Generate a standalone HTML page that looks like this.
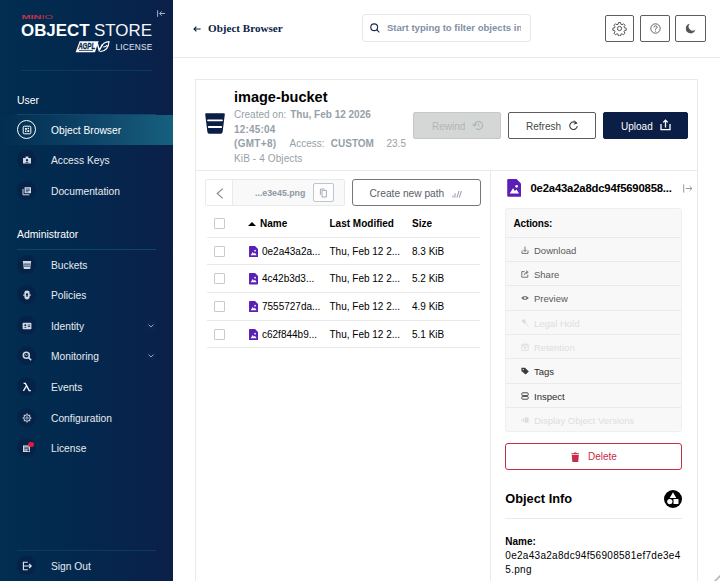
<!DOCTYPE html>
<html lang="en">
<head>
<meta charset="utf-8">
<title>MinIO Console</title>
<style>
*{box-sizing:border-box;margin:0;padding:0}
html,body{width:720px;height:581px;overflow:hidden;background:#fff}
body{font-family:"Liberation Sans",sans-serif;font-size:9.7px;color:#000;position:relative}
.abs{position:absolute}
.nw{white-space:nowrap}
/* sidebar */
#side{position:absolute;left:0;top:0;width:173px;height:581px;background:linear-gradient(90deg,#022e50 0%,#03274e 50%,#0b2049 100%);overflow:hidden}
#side .hr{position:absolute;height:1px;background:#0f446c}
#side .grp{position:absolute;left:17px;font-size:10.4px;color:#fff;white-space:nowrap}
.mi{position:absolute;left:0;width:173px;height:30px}
.mi .ic{position:absolute;left:17px;top:5px;width:19px;height:19px;border-radius:50%;background:rgba(8,28,66,.6)}
.mi .ic svg{position:absolute;left:4.5px;top:4.5px;width:10px;height:10px}
.mi .tx{position:absolute;left:51px;top:1px;line-height:30px;font-size:10.25px;color:#e6ebf0;white-space:nowrap}
.mi.sel{background:linear-gradient(90deg,rgba(22,96,127,0) 0%,#16607f 100%)}
.mi.sel .ic{background:transparent;border:1px solid #fff}
.mi.sel .ic svg{left:3.5px;top:3.5px}
.mi.sel .tx{color:#fff}
.mi .chev{position:absolute;left:146px;top:10px;width:10px;height:10px;background:#0a2450;border-radius:1px}
/* header */
#hdr{position:absolute;left:173px;top:0;width:547px;height:58px;background:#fff;border-bottom:1px solid #eaeaea}
.hbtn{position:absolute;top:15px;width:29px;height:27px;border:1px solid #5e5e5e;border-radius:2px;background:#fff}
/* card */
#card{position:absolute;left:195px;top:79px;width:503px;height:520px;border:1px solid #eaeaea;background:#fff}
.btn{position:absolute;top:112px;height:27px;border-radius:2px;font-size:10px;line-height:25px;white-space:nowrap}
.gray{color:#969fa8}
.btn span{top:.6px}
.row{position:absolute;left:207px;width:273px;height:1px;background:#eaeaea}
.cb{position:absolute;left:214px;width:11px;height:11px;border:1px solid #cacaca;border-radius:1px;background:#fff}
.cell{position:absolute;font-size:10px;white-space:nowrap;color:#000;line-height:12px}
.act{position:absolute;left:506px;width:175px;height:24px;border-top:1px solid #eaeaea;font-size:9.5px;line-height:24px;color:#2c2c2c;white-space:nowrap}
.act span{position:absolute;left:28px;top:.7px}
.act svg{position:absolute;left:15px;top:8px;width:8px;height:8px}
.act.dis{color:#dedede}
.act.lt{color:#5a5a5a}
</style>
</head>
<body>
<div id="side">
<svg class="abs" style="left:0;top:0" width="173" height="60" viewBox="0 0 173 60">
 <text x="21.5" y="18.6" font-family="Liberation Sans, sans-serif" font-size="6.2" fill="#c8314a" textLength="31.5" lengthAdjust="spacingAndGlyphs"><tspan font-weight="700">MIN</tspan><tspan font-weight="400">IO</tspan></text>
 <text x="21" y="36.4" font-family="Liberation Sans, sans-serif" font-size="16.4" font-weight="700" fill="#fff" textLength="68.5" lengthAdjust="spacingAndGlyphs">OBJECT</text>
 <text x="94" y="36.4" font-family="Liberation Sans, sans-serif" font-size="16.4" font-weight="400" fill="#f4f6f9" textLength="58" lengthAdjust="spacingAndGlyphs">STORE</text>
 <path d="M79.6 41.3 L98.6 41.3 L95 52.2 L75.6 52.2 Z" fill="#fff"/>
 <text x="78.2" y="48.9" font-family="Liberation Sans, sans-serif" font-size="8.4" font-weight="700" font-style="italic" fill="#0a2850" stroke="#0a2850" stroke-width="0.3" textLength="17" lengthAdjust="spacingAndGlyphs">AGPL</text>
 <path d="M79 50.4 H93" stroke="#0a2850" stroke-width="0.8"/>
 <path d="M97.4 43.6 L99.2 50.4 L102.6 44.4" fill="none" stroke="#fff" stroke-width="1.5"/>
 <path d="M100.2 51.6 Q108.4 51 109 41.6 Q103.4 42 101.6 46.2 M103.2 47 Q105.6 47.2 107.2 45.2" fill="none" stroke="#fff" stroke-width="1.1"/>
 <text x="115.5" y="49.5" font-family="Liberation Sans, sans-serif" font-size="8.3" fill="#e4e8ee" textLength="36.8" lengthAdjust="spacing">LICENSE</text>
 <path d="M157.6 10.3 V16.8 M165 13.5 H159.6 M161.8 11.3 L159.6 13.5 L161.8 15.7" fill="none" stroke="#b9c3d4" stroke-width="0.9"/>
</svg>
<div class="hr" style="left:21px;top:70px;width:131px;background:#0c3a5f"></div>
<div class="grp" style="top:94.5px">User</div>
<div class="hr" style="left:17px;top:114px;width:139px"></div>
<div class="mi sel" style="top:115px"><div class="ic"><svg viewBox="0 0 10 10"><rect x="1.2" y="1.2" width="7.6" height="7.6" rx="1" fill="none" stroke="#fff" stroke-width="1"/><rect x="3" y="3" width="1.8" height="1.8" fill="#fff"/><rect x="5.4" y="5.2" width="1.8" height="1.8" fill="#fff"/><rect x="5.6" y="2.8" width="1.4" height="1.4" fill="#fff"/><rect x="3" y="5.6" width="1.4" height="1.4" fill="#fff"/></svg></div><div class="tx">Object Browser</div></div>
<div class="mi" style="top:145px"><div class="ic"><svg viewBox="0 0 10 10"><path d="M1 3 H9 V8.6 H1 Z M3.6 1.4 H6.4 V3 H3.6 Z" fill="#cfd8e3"/><circle cx="5" cy="5.2" r="1.1" fill="#072045"/><path d="M3.2 7.8 Q5 5.8 6.8 7.8 Z" fill="#072045"/></svg></div><div class="tx">Access Keys</div></div>
<div class="mi" style="top:176px"><div class="ic"><svg viewBox="0 0 10 10"><path d="M2.6 1.2 H9 V7.2 H2.6 Z" fill="#cfd8e3"/><path d="M1 3 V8.8 H7.4" fill="none" stroke="#cfd8e3" stroke-width="1"/><path d="M3.8 3 H7.8 M3.8 4.4 H7.8 M3.8 5.8 H6.4" stroke="#072045" stroke-width="0.7"/></svg></div><div class="tx">Documentation</div></div>
<div class="mi" style="top:250px"><div class="ic"><svg viewBox="0 0 10 10"><path d="M0.8 1 H9.2 L8.2 9 H1.8 Z" fill="#cfd8e3"/><path d="M1.6 4.1 H8.4 M1.9 6.1 H8.1" stroke="#072045" stroke-width="0.8"/></svg></div><div class="tx">Buckets</div></div>
<div class="mi" style="top:280px"><div class="ic"><svg viewBox="0 0 10 10"><path d="M5 0.6 C6.6 0.6 7.6 1.4 7.6 2.6 L7.6 7 C7.6 8.4 6.4 9.4 5 9.4 C3.6 9.4 2.4 8.4 2.4 7 L2.4 2.6 C2.4 1.4 3.4 0.6 5 0.6 Z" fill="#cfd8e3"/><circle cx="5" cy="4.4" r="1.1" fill="#072045"/><rect x="4.5" y="4.8" width="1" height="2.2" fill="#072045"/><path d="M1.4 4.2 H2.6 V6 H1.4 Z M7.4 4.2 H8.6 V6 H7.4 Z" fill="#cfd8e3"/></svg></div><div class="tx">Policies</div></div>
<div class="mi" style="top:311px"><div class="ic"><svg viewBox="0 0 10 10"><rect x="0.6" y="1.8" width="8.8" height="6.4" rx="0.8" fill="#cfd8e3"/><circle cx="3.3" cy="4.2" r="1" fill="#072045"/><path d="M1.8 6.8 Q3.3 5 4.8 6.8 Z" fill="#072045"/><path d="M5.8 4 H8.2 M5.8 5.6 H8.2" stroke="#072045" stroke-width="0.8"/></svg></div><div class="tx">Identity</div><div class="chev"><svg class="abs" style="left:2px;top:3px" width="6" height="4" viewBox="0 0 6 4"><path d="M0.6 0.6 L3 3 L5.4 0.6" fill="none" stroke="#aab6c8" stroke-width="0.9"/></svg></div></div>
<div class="mi" style="top:341px"><div class="ic"><svg viewBox="0 0 10 10"><circle cx="4.3" cy="4.3" r="3" fill="none" stroke="#cfd8e3" stroke-width="1.5"/><path d="M6.6 6.6 L9.2 9.2" stroke="#cfd8e3" stroke-width="1.6"/><path d="M2.6 4.6 L3.8 3.6 L4.6 4.8 L6 3.4" fill="none" stroke="#cfd8e3" stroke-width="0.7"/></svg></div><div class="tx">Monitoring</div><div class="chev"><svg class="abs" style="left:2px;top:3px" width="6" height="4" viewBox="0 0 6 4"><path d="M0.6 0.6 L3 3 L5.4 0.6" fill="none" stroke="#aab6c8" stroke-width="0.9"/></svg></div></div>
<div class="mi" style="top:372px"><div class="ic"><svg viewBox="0 0 10 10"><path d="M1.6 1.4 H3.4 L7.2 8.6 H8.8 M4.4 4 L1.4 8.8" fill="none" stroke="#fff" stroke-width="1.3"/></svg></div><div class="tx">Events</div></div>
<div class="mi" style="top:403px"><div class="ic"><svg viewBox="0 0 10 10"><circle cx="5" cy="5" r="3.2" fill="none" stroke="#cfd8e3" stroke-width="1"/><circle cx="5" cy="5" r="1.2" fill="none" stroke="#cfd8e3" stroke-width="0.8"/><path d="M5 0.6 V1.8 M5 8.2 V9.4 M0.6 5 H1.8 M8.2 5 H9.4 M1.9 1.9 L2.7 2.7 M7.3 7.3 L8.1 8.1 M1.9 8.1 L2.7 7.3 M7.3 2.7 L8.1 1.9" stroke="#cfd8e3" stroke-width="1.2"/></svg></div><div class="tx">Configuration</div></div>
<div class="mi" style="top:433px"><div class="ic"><svg viewBox="0 0 10 10"><path d="M1 2.4 H8 V9 H1 Z" fill="#cfd8e3"/><path d="M2.2 4.2 H6.8 M2.2 5.6 H6.8 M2.2 7.2 H4.6" stroke="#072045" stroke-width="0.7"/><rect x="5.4" y="6.4" width="1.8" height="1.8" fill="#072045"/></svg></div><div class="tx">License</div><div class="abs" style="left:28px;top:8.5px;width:5.5px;height:5.5px;border-radius:50%;background:#e21b3c"></div></div>
<div class="mi" style="top:551px"><div class="ic"><svg viewBox="0 0 10 10"><path d="M5.8 1.2 H1.4 V8.8 H5.8" fill="none" stroke="#e4e9f0" stroke-width="1.1"/><path d="M1.4 5 H9 M7.2 3 L9.2 5 L7.2 7" fill="none" stroke="#e4e9f0" stroke-width="1.1"/></svg></div><div class="tx">Sign Out</div></div>
<div class="grp" style="top:229px">Administrator</div>
<div class="hr" style="left:17px;top:249px;width:139px"></div>
<div class="hr" style="left:17px;top:550px;width:139px;background:#0d3a61"></div>
</div>
<div id="hdr">
<svg class="abs" style="left:20px;top:24.5px" width="8" height="8" viewBox="0 0 8 8"><path d="M7.6 4 H1.2 M3.4 1.6 L1 4 L3.4 6.4" fill="none" stroke="#0b1e46" stroke-width="1.1"/></svg>
<div class="abs nw" style="left:35px;top:21px;font-family:'Liberation Serif',serif;font-weight:700;font-size:11.1px;line-height:14px;color:#0b1e46">Object Browser</div>
<div class="abs" style="left:189px;top:14px;width:169px;height:28px;border:1px solid #e6e6e6;border-radius:3px;background:#fff;overflow:hidden">
 <svg class="abs" style="left:6.5px;top:8px" width="10" height="10" viewBox="0 0 10 10"><circle cx="4.2" cy="4.2" r="3.4" fill="none" stroke="#1b2a4a" stroke-width="1.15"/><path d="M6.7 6.7 L9.3 9.3" stroke="#1b2a4a" stroke-width="1.2"/></svg>
 <div class="abs nw" style="left:24px;top:6px;font-weight:700;font-size:9.55px;line-height:14px;color:#7f8fa6;width:134px;overflow:hidden">Start typing to filter objects in the bucket</div>
</div>
<div class="hbtn" style="left:432px"><svg class="abs" style="left:6px;top:5px" width="15" height="15" viewBox="0 0 24 24"><path fill="none" stroke="#555" stroke-width="1.6" stroke-linejoin="round" d="M10.3 2.5h3.4l.5 2.7 1.9.8 2.3-1.6 2.4 2.4-1.6 2.3.8 1.9 2.7.5v3.4l-2.7.5-.8 1.9 1.6 2.3-2.4 2.4-2.3-1.6-1.9.8-.5 2.7h-3.4l-.5-2.7-1.9-.8-2.3 1.6-2.4-2.4 1.6-2.3-.8-1.9-2.7-.5v-3.4l2.7-.5.8-1.9-1.6-2.3 2.4-2.4 2.3 1.6 1.9-.8z"/><circle cx="12" cy="12" r="3.4" fill="none" stroke="#555" stroke-width="1.6"/></svg></div>
<div class="hbtn" style="left:467px;width:30px"><svg class="abs" style="left:9px;top:7px" width="11" height="11" viewBox="0 0 11 11"><circle cx="5.5" cy="5.5" r="4.7" fill="none" stroke="#555" stroke-width="0.9"/><path d="M3.9 4.4 Q3.9 2.9 5.5 2.9 Q7.1 2.9 7.1 4.3 Q7.1 5.2 5.5 5.9 V6.7" fill="none" stroke="#555" stroke-width="0.9"/><circle cx="5.5" cy="8" r="0.6" fill="#555"/></svg></div>
<div class="hbtn" style="left:502px;width:31px"><svg class="abs" style="left:9px;top:7px" width="11" height="11" viewBox="0 0 11 11"><path d="M5 0.8 A4.8 4.8 0 1 0 10.3 6.6 A3.9 3.9 0 0 1 5 0.8 Z" fill="#555"/></svg></div>
</div>
<div id="card">
<svg class="abs" style="left:9px;top:33px" width="20" height="21" viewBox="0 0 20 21"><path d="M1.2 0.3 H18.8 Q20 0.3 19.8 1.5 L17.6 19 Q17.4 20.7 15.8 20.7 H4.2 Q2.6 20.7 2.4 19 L0.2 1.5 Q0 0.3 1.2 0.3 Z" fill="#0b1e46"/><path d="M3 7.3 H17 M3.8 14 H16.2" stroke="#fff" stroke-width="1.8" stroke-linecap="round"/></svg>
<div class="abs nw" style="left:38px;top:7.5px;font-weight:700;font-size:14.5px;line-height:18px;color:#000">image-bucket</div>
<div class="abs nw gray" style="left:38px;top:28px;font-size:10px;line-height:14.5px"><span class="abs" style="left:0;top:0">Created on:</span><b class="abs" style="left:56.2px;top:0">Thu, Feb 12 2026</b><b class="abs" style="left:0;top:14.5px;letter-spacing:0.18px">12:45:04</b><b class="abs" style="left:0;top:29px;letter-spacing:0.3px">(GMT+8)</b><span class="abs" style="left:55.5px;top:29px">Access:</span><b class="abs" style="left:96.8px;top:29px">CUSTOM</b><span class="abs" style="left:152.5px;top:29px">23.5</span><span class="abs" style="left:0;top:43.5px;letter-spacing:0.12px">KiB - 4 Objects</span></div>
<div class="btn" style="left:217px;top:32px;width:88px;background:#d5d7d7;border:1px solid #c6c8c8;color:#b0b5b8"><span class="abs" style="left:18px">Rewind</span><svg class="abs" style="left:58px;top:6.5px" width="12" height="11" viewBox="0 0 12 11"><path d="M2.6 5.4 A4 4 0 1 1 4 8.5" fill="none" stroke="#b0b5b8" stroke-width="1.15"/><path d="M0.5 3.8 L2.6 6 L4.7 4" fill="none" stroke="#b0b5b8" stroke-width="1.15"/><path d="M6.6 3.3 V5.6 L8.2 6.6" fill="none" stroke="#b0b5b8" stroke-width="0.9"/></svg></div>
<div class="btn" style="left:312px;top:32px;width:88px;background:#fff;border:1px solid #5e5e5e;color:#484848"><span class="abs" style="left:17px">Refresh</span><svg class="abs" style="left:59px;top:7px" width="11" height="11" viewBox="0 0 11 11"><path d="M8.6 3.4 A3.8 3.8 0 1 0 9.3 6.2" fill="none" stroke="#3c3c3c" stroke-width="1.1"/><path d="M6.2 0.6 L8.8 3.3 L5.8 4" fill="none" stroke="#3c3c3c" stroke-width="1"/></svg></div>
<div class="btn" style="left:407px;top:32px;width:85px;background:#0b1e46;border:1px solid #0b1e46;color:#fff"><span class="abs" style="left:17px">Upload</span><svg class="abs" style="left:56px;top:6px" width="11" height="12" viewBox="0 0 11 12"><path d="M1 5 V10.6 H10 V5" fill="none" stroke="#fff" stroke-width="1.3"/><path d="M5.5 8.4 V1.4 M3.2 3.4 L5.5 1.2 L7.8 3.4" fill="none" stroke="#fff" stroke-width="1.3"/></svg></div>
<div class="abs" style="left:0;top:90px;width:501px;height:1px;background:#eaeaea"></div>
<div class="abs" style="left:294px;top:91px;width:1px;height:430px;background:#eaeaea"></div>
<div class="abs" style="left:9px;top:99px;width:140px;height:27px;border:1px solid #eaeaea;border-radius:2px;background:#f9f9f9;overflow:hidden"><div class="abs" style="left:0;top:0;width:27px;height:25px;background:#fff;border-right:1px solid #eaeaea"></div><svg class="abs" style="left:10px;top:7.5px" width="8" height="11" viewBox="0 0 8 11"><path d="M6.8 0.6 L1.2 5.5 L6.8 10.4" fill="none" stroke="#7b8796" stroke-width="1.1"/></svg><div class="abs nw" style="left:49px;top:6.7px;font-weight:700;font-size:8.8px;line-height:12px;color:#8d98a5">...e3e45.png</div><div class="abs" style="left:107px;top:3px;width:21px;height:19px;border:1px solid #c0c6cf;border-radius:2px;background:#fdfdfd"><svg class="abs" style="left:5px;top:4px" width="9" height="10" viewBox="0 0 9 10"><path d="M3 2.4 H7.4 V9 H3 Z" fill="none" stroke="#97a1ad" stroke-width="0.85"/><path d="M1.4 6.8 V1 H5.6" fill="none" stroke="#97a1ad" stroke-width="0.85"/></svg></div></div>
<div class="abs" style="left:155.5px;top:99px;width:129px;height:27px;border:1px solid #767676;border-radius:3px;background:#fff"><span class="abs nw" style="left:17px;top:1px;line-height:25px;font-size:10.2px;color:#5a6068">Create new path</span><svg class="abs" style="left:99.5px;top:9.5px" width="11" height="8" viewBox="0 0 11 8"><path d="M1 7.6 V5.4 M3 7.6 V3.2 M4.9 7.6 L7 1 M7.3 7.6 L9.4 1" fill="none" stroke="#8d98a5" stroke-width="0.95"/></svg></div>
<div class="cb" style="left:18px;top:138px"></div><svg class="abs" style="left:52px;top:142px" width="8" height="4" viewBox="0 0 8 4"><path d="M0 4 L4 0 L8 4 Z" fill="#000"/></svg><div class="cell" style="left:64px;top:137.5px;font-weight:700">Name</div><div class="cell" style="left:133.5px;top:137.5px;font-weight:700">Last Modified</div><div class="cell" style="left:216px;top:137.5px;font-weight:700">Size</div>
<div class="row" style="left:11px;top:157px"></div><div class="row" style="left:11px;top:184px"></div><div class="row" style="left:11px;top:212px"></div><div class="row" style="left:11px;top:240px"></div><div class="row" style="left:11px;top:267px"></div><div class="cb" style="left:18px;top:165.7px"></div><svg class="abs" style="left:52.6px;top:165.6px" width="9.2" height="11.4" viewBox="0 0 16 20"><path d="M1.5 0 H10.5 L16 5.5 V18.5 Q16 20 14.5 20 H1.5 Q0 20 0 18.5 V1.5 Q0 0 1.5 0 Z" fill="#5a1fb5"/><path d="M2.8 16.4 L6.5 10.4 L8.6 13.6 L10.4 11.7 L13.3 16.4 Z" fill="#fff"/><circle cx="10.6" cy="8.2" r="1.5" fill="#fff"/></svg><div class="cell" style="left:66px;top:165.6px">0e2a43a2a...</div><div class="cell" style="left:133.5px;top:165.6px">Thu, Feb 12 2...</div><div class="cell" style="left:216px;top:165.6px">8.3 KiB</div>
<div class="cb" style="left:18px;top:193.3px"></div><svg class="abs" style="left:52.6px;top:193.2px" width="9.2" height="11.4" viewBox="0 0 16 20"><path d="M1.5 0 H10.5 L16 5.5 V18.5 Q16 20 14.5 20 H1.5 Q0 20 0 18.5 V1.5 Q0 0 1.5 0 Z" fill="#5a1fb5"/><path d="M2.8 16.4 L6.5 10.4 L8.6 13.6 L10.4 11.7 L13.3 16.4 Z" fill="#fff"/><circle cx="10.6" cy="8.2" r="1.5" fill="#fff"/></svg><div class="cell" style="left:66px;top:193.3px">4c42b3d3...</div><div class="cell" style="left:133.5px;top:193.3px">Thu, Feb 12 2...</div><div class="cell" style="left:216px;top:193.3px">5.2 KiB</div>
<div class="cb" style="left:18px;top:221px"></div><svg class="abs" style="left:52.6px;top:220.9px" width="9.2" height="11.4" viewBox="0 0 16 20"><path d="M1.5 0 H10.5 L16 5.5 V18.5 Q16 20 14.5 20 H1.5 Q0 20 0 18.5 V1.5 Q0 0 1.5 0 Z" fill="#5a1fb5"/><path d="M2.8 16.4 L6.5 10.4 L8.6 13.6 L10.4 11.7 L13.3 16.4 Z" fill="#fff"/><circle cx="10.6" cy="8.2" r="1.5" fill="#fff"/></svg><div class="cell" style="left:66px;top:220.9px">7555727da...</div><div class="cell" style="left:133.5px;top:220.9px">Thu, Feb 12 2...</div><div class="cell" style="left:216px;top:220.9px">4.9 KiB</div>
<div class="cb" style="left:18px;top:248.7px"></div><svg class="abs" style="left:52.6px;top:248.6px" width="9.2" height="11.4" viewBox="0 0 16 20"><path d="M1.5 0 H10.5 L16 5.5 V18.5 Q16 20 14.5 20 H1.5 Q0 20 0 18.5 V1.5 Q0 0 1.5 0 Z" fill="#5a1fb5"/><path d="M2.8 16.4 L6.5 10.4 L8.6 13.6 L10.4 11.7 L13.3 16.4 Z" fill="#fff"/><circle cx="10.6" cy="8.2" r="1.5" fill="#fff"/></svg><div class="cell" style="left:66px;top:248.5px">c62f844b9...</div><div class="cell" style="left:133.5px;top:248.5px">Thu, Feb 12 2...</div><div class="cell" style="left:216px;top:248.5px">5.1 KiB</div>
<svg class="abs" style="left:310.8px;top:99.2px" width="14.7" height="17.8" viewBox="0 0 16 20"><path d="M1.5 0 H10.5 L16 5.5 V18.5 Q16 20 14.5 20 H1.5 Q0 20 0 18.5 V1.5 Q0 0 1.5 0 Z" fill="#5a1fb5"/><path d="M2.8 16.4 L6.5 10.4 L8.6 13.6 L10.4 11.7 L13.3 16.4 Z" fill="#fff"/><circle cx="10.6" cy="8.2" r="1.5" fill="#fff"/></svg><div class="abs nw" style="left:334.5px;top:101px;font-weight:700;font-size:11.3px;letter-spacing:-0.18px;line-height:15px;color:#000">0e2a43a2a8dc94f5690858...</div><svg class="abs" style="left:487px;top:103.5px" width="10" height="9" viewBox="0 0 10 9"><path d="M0.7 0.4 V8.6 M2.8 4.5 H9 M6.6 2.2 L9 4.5 L6.6 6.8" fill="none" stroke="#8a8f96" stroke-width="0.9"/></svg>
<div class="abs" style="left:309px;top:128px;width:177px;height:224px;border:1px solid #efefef;border-radius:3px;background:#f8f8f8"></div><div class="abs nw" style="left:317.5px;top:136.5px;font-weight:700;font-size:10px;letter-spacing:-0.15px;line-height:14px;color:#000">Actions:</div><div class="act lt" style="left:310px;top:157px"><svg viewBox="0 0 8 8"><path d="M1 4.5 V7.4 H7 V4.5 M4 0.6 V5.4 M2.3 3.8 L4 5.5 L5.7 3.8" fill="none" stroke="#666" stroke-width="0.9"/></svg><span>Download</span></div>
<div class="act lt" style="left:310px;top:181px"><svg viewBox="0 0 8 8"><path d="M6.8 4.6 V7.2 H0.8 V1.6 H3.6" fill="none" stroke="#666" stroke-width="0.9"/><path d="M3.4 5 Q3.6 2.4 6 2.2 M5 0.6 L7.2 2.2 L5.2 3.8" fill="none" stroke="#666" stroke-width="0.9"/></svg><span>Share</span></div>
<div class="act lt" style="left:310px;top:205px"><svg viewBox="0 0 8 8"><path d="M0.2 4 Q4 0 7.8 4 Q4 8 0.2 4 Z" fill="#666"/><circle cx="4" cy="4" r="1.3" fill="#f8f8f8"/><circle cx="4" cy="4" r="0.6" fill="#666"/></svg><span>Preview</span></div>
<div class="act dis" style="left:310px;top:230px"><svg viewBox="0 0 8 8"><path d="M1 1.6 L3 0.4 L5 3 L3.2 4.4 Z M4.2 3.8 L7.6 7.4" fill="#dddddd" stroke="#dddddd" stroke-width="0.9"/></svg><span>Legal Hold</span></div>
<div class="act dis" style="left:310px;top:254px"><svg viewBox="0 0 8 8"><rect x="0.8" y="1.4" width="6.4" height="6" rx="0.6" fill="none" stroke="#dddddd" stroke-width="0.9"/><path d="M0.8 3 H7.2 M2.6 0.4 V1.8 M5.4 0.4 V1.8" stroke="#dddddd" stroke-width="0.9"/><rect x="3" y="4.2" width="2" height="1.6" fill="#dddddd"/></svg><span>Retention</span></div>
<div class="act" style="left:310px;top:278px"><svg viewBox="0 0 8 8"><path d="M0.4 0.8 H4 L7.8 4.4 L4.6 7.6 L0.4 4 Z" fill="#3a3a3a"/><circle cx="2.2" cy="2.6" r="0.7" fill="#f8f8f8"/></svg><span>Tags</span></div>
<div class="act" style="left:310px;top:303px"><svg viewBox="0 0 8 8"><rect x="0.8" y="0.8" width="6.4" height="2.8" rx="0.8" fill="none" stroke="#3a3a3a" stroke-width="0.9"/><rect x="0.8" y="4.4" width="6.4" height="2.8" rx="0.8" fill="none" stroke="#3a3a3a" stroke-width="0.9"/></svg><span>Inspect</span></div>
<div class="act dis" style="left:310px;top:327px"><svg viewBox="0 0 8 8"><path d="M0.4 3 H1.4 V5.4 H0.4 Z M2 2.4 H3.2 V6 H2 Z M3.8 1.6 H7.6 V6.8 H3.8 Z" fill="#dddddd"/></svg><span>Display Object Versions</span></div>
<div class="abs" style="left:309px;top:363px;width:177px;height:27px;border:1px solid #c72c48;border-radius:3px;background:#fff"><svg class="abs" style="left:64.5px;top:7.6px" width="8.6" height="10.6" viewBox="0 0 9 11"><path d="M0.8 3 H8.2 L7.6 10.2 Q7.5 11 6.7 11 H2.3 Q1.5 11 1.4 10.2 Z M0.4 1.2 H3 L3.4 0.4 H5.6 L6 1.2 H8.6 V2.3 H0.4 Z" fill="#c72c48"/></svg><span class="abs nw" style="left:82px;top:0;line-height:25.5px;font-size:10px;color:#c72c48">Delete</span></div>
<div class="abs nw" style="left:309.3px;top:410px;font-weight:700;font-size:12.8px;line-height:17px;color:#000">Object Info</div><svg class="abs" style="left:468px;top:410px" width="18" height="18" viewBox="0 0 18 18"><circle cx="9" cy="9" r="9" fill="#000"/><path d="M9 2.2 L12.3 7.9 H5.7 Z" fill="#fff"/><circle cx="5.8" cy="11.6" r="2.6" fill="#fff"/><rect x="9.5" y="9" width="5" height="5" rx="0.6" fill="#fff"/></svg><div class="abs" style="left:309px;top:438px;width:177px;height:1px;background:#eaeaea"></div><div class="abs nw" style="left:309.3px;top:454px;font-weight:700;font-size:10px;line-height:14.5px;color:#000;margin-top:0.5px">Name:</div><div class="abs" style="left:309.3px;top:468.5px;width:185px;font-size:10px;line-height:14.5px;color:#000;letter-spacing:0.29px;word-break:break-all">0e2a43a2a8dc94f56908581ef7de3e4<br>5.png</div>
</div>
<svg class="abs" style="left:713px;top:574px" width="7" height="7" viewBox="0 0 7 7"><path d="M1.5 7.5 L7.5 1.5" stroke="#b4b4b4" stroke-width="1.6"/></svg>
</body>
</html>
